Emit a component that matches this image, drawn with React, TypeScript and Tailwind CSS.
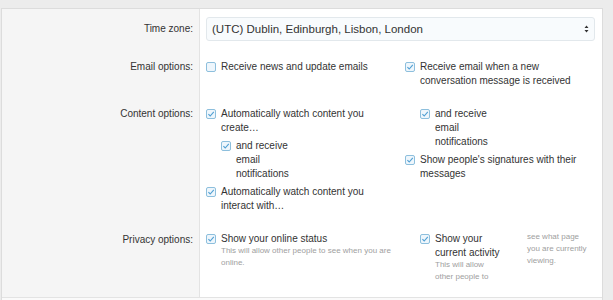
import React from "react";

function Box({ checked = true }: { checked?: boolean }) {
  return (
    <span className="mt-[2px] flex h-[10px] w-[10px] shrink-0 items-center justify-center rounded-[2px] border border-[#8dbfdd] bg-[#eef6fc]">
      {checked ? (
        <svg width="8" height="8" viewBox="0 0 8 8">
          <path d="M1.4 4.2 L3.2 6 L6.8 1.8" fill="none" stroke="#4f9fd3" strokeWidth="1.1" />
        </svg>
      ) : null}
    </span>
  );
}

function Opt({ children, checked = true, hint }: { children: React.ReactNode; checked?: boolean; hint?: React.ReactNode }) {
  return (
    <div className="flex gap-[5px]">
      <Box checked={checked} />
      <div>
        <div>{children}</div>
        {hint ? <div className="-mt-[1px] text-[8px] leading-[12px] text-[#a0a0a0]">{hint}</div> : null}
      </div>
    </div>
  );
}

function Row({ label, children, pt, pb, lpt }: { label: string; children: React.ReactNode; pt: string; pb: string; lpt?: string }) {
  return (
    <div className="flex">
      <div className={`w-[198px] shrink-0 border-r border-[#e3e3e3] bg-[#f5f5f5] pr-[6px] text-right ${lpt ?? pt}`}>{label}</div>
      <div className={`flex-1 pl-[6px] pr-[6px] ${pt} ${pb}`}>{children}</div>
    </div>
  );
}

export default function App() {
  return (
    <div
      className="h-[300px] w-[613px] overflow-hidden bg-[#ececec] pt-[8px] text-[10px] leading-[14px] text-[#333]"
      style={{ fontFamily: '"Liberation Sans", Arial, sans-serif' }}
    >
      <div className="ml-[1px] w-[602px] border border-[#dcdcdc] bg-white">
        <Row label="Time zone:" pt="pt-[8px]" pb="pb-[8px]" lpt="pt-[13px]">
          <div className="flex h-[24px] w-[389px] items-center justify-between rounded-[3px] border border-[#e2e8ec] bg-[#f8fbfd] pl-[5px] pr-[5px] text-[11.5px]">
            <span>(UTC) Dublin, Edinburgh, Lisbon, London</span>
            <svg width="5" height="8" viewBox="0 0 5 8">
              <path d="M0.5 3 L2.5 0.6 L4.5 3 Z M0.5 5 L2.5 7.4 L4.5 5 Z" fill="#333" />
            </svg>
          </div>
        </Row>
        <Row label="Email options:" pt="pt-[11px]" pb="pb-[8px]">
          <div className="flex">
            <div className="w-[199px]">
              <Opt checked={false}>Receive news and update emails</Opt>
            </div>
            <div className="w-[188px]">
              <Opt>Receive email when a new conversation message is received</Opt>
            </div>
          </div>
        </Row>
        <Row label="Content options:" pt="pt-[11px]" pb="pb-[9px]">
          <div className="flex">
            <div className="flex w-[199px] flex-col gap-[4px] pr-[10px]">
              <Opt>Automatically watch content you create…</Opt>
              <div className="pl-[15px]">
                <Opt>
                  <span className="block w-[64px]">and receive email notifications</span>
                </Opt>
              </div>
              <Opt>Automatically watch content you interact with…</Opt>
            </div>
            <div className="flex w-[188px] flex-col gap-[4px]">
              <div className="pl-[15px]">
                <Opt>
                  <span className="block w-[64px]">and receive email notifications</span>
                </Opt>
              </div>
              <Opt>Show people's signatures with their messages</Opt>
            </div>
          </div>
        </Row>
        <Row label="Privacy options:" pt="pt-[10px]" pb="pb-[14px]" lpt="pt-[11px]">
          <div className="flex">
            <div className="w-[214px] pr-[10px]">
              <Opt hint="This will allow other people to see when you are online.">Show your online status</Opt>
            </div>
            <div className="w-[107px] pr-[20px]">
              <Opt hint={<span className="block w-[64px]">This will allow other people to</span>}>
                <span className="block w-[72px]">Show your current activity</span>
              </Opt>
            </div>
            <div className="-mt-[1px] w-[66px] text-[8px] leading-[12px] text-[#a0a0a0]">
              see what page you are currently viewing.
            </div>
          </div>
        </Row>
        <div className="h-[20px] border-t border-[#e3e3e3] bg-[#fafafa]" />
      </div>
    </div>
  );
}
